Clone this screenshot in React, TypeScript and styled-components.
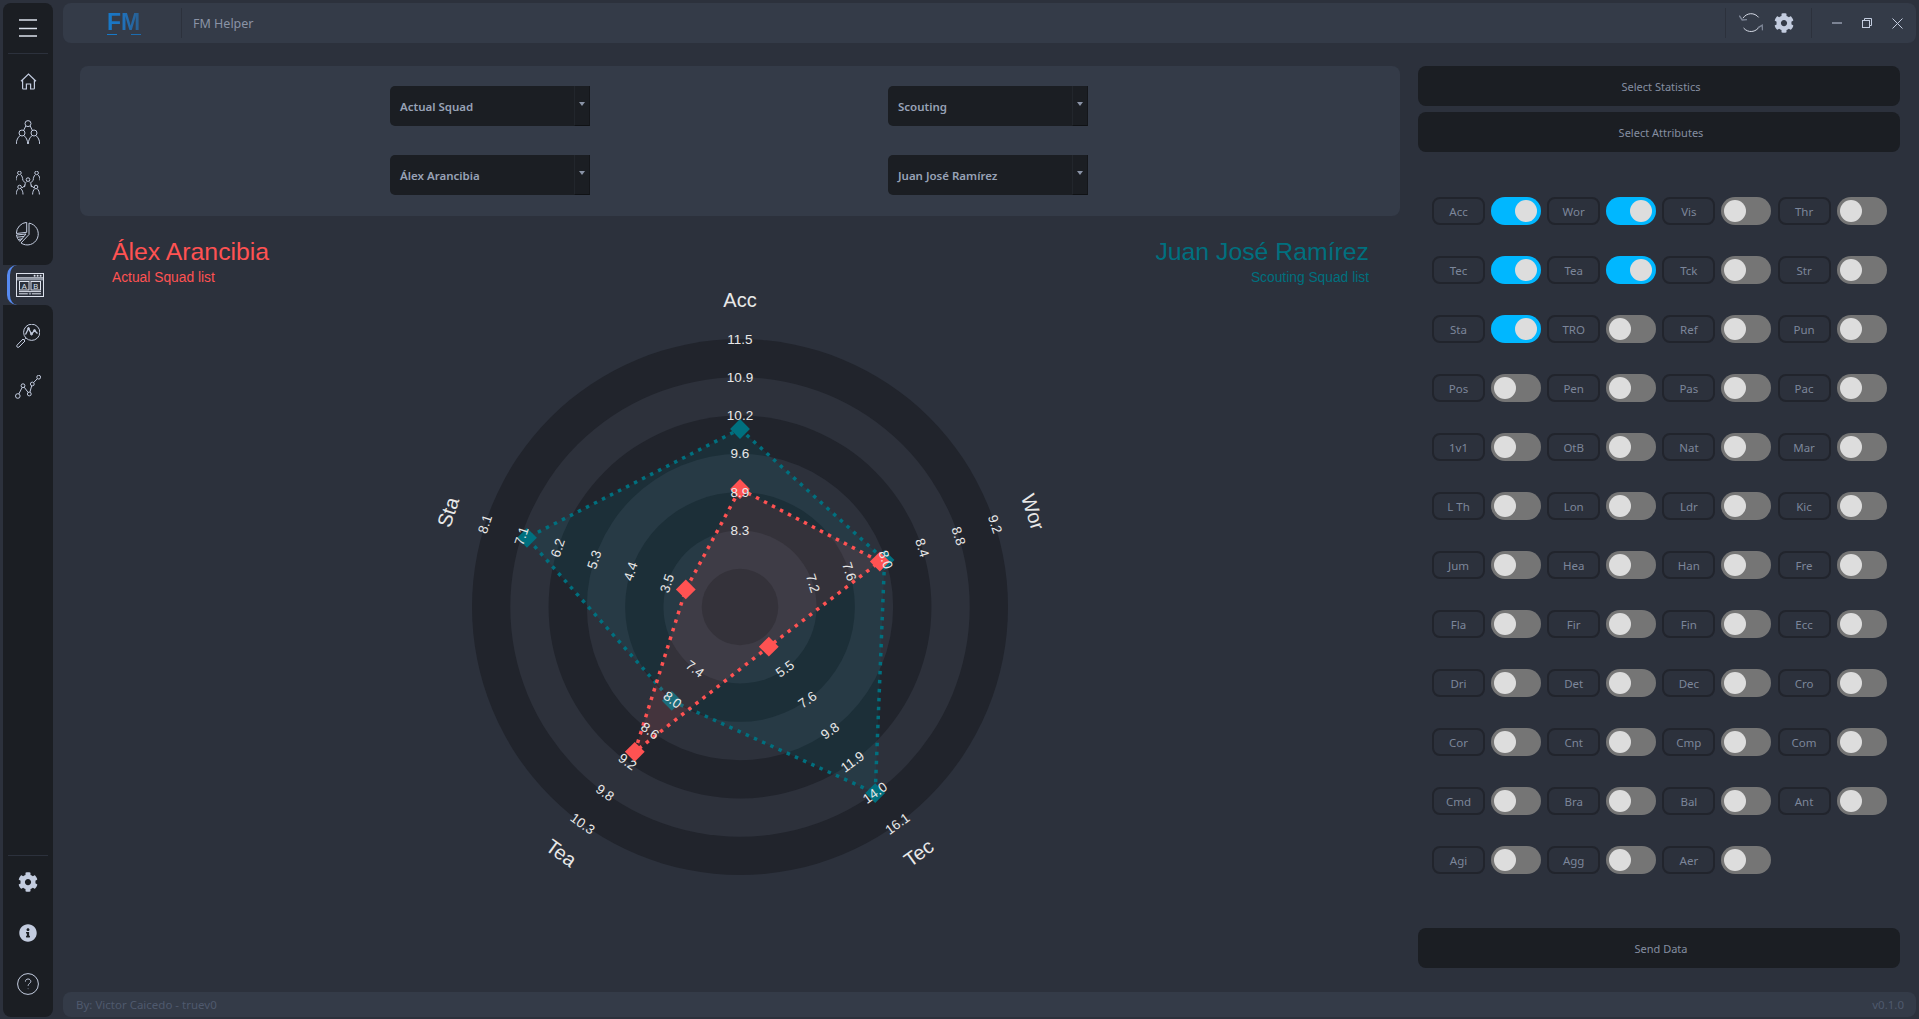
import React from "react";
import styled, { createGlobalStyle } from "styled-components";
import { FaCog, FaInfoCircle } from "react-icons/fa";

const GlobalStyle = createGlobalStyle`
  html, body {
    margin: 0;
    height: 100%;
    background: #2c313c;
    overflow: hidden;
  }
  * {
    box-sizing: border-box;
  }
`;

const UI_FONT = `"Noto Sans", "Open Sans", sans-serif`;

const Shell = styled.div`
  display: flex;
  gap: 10px;
  height: 1019px;
  padding: 3px 3px 2px 3px;
  font-family: ${UI_FONT};
`;

const Sidebar = styled.nav`
  width: 50px;
  display: flex;
  flex-direction: column;
`;

const SideSegment = styled.div<{ $first?: boolean }>`
  background: #1b1e23;
  display: flex;
  flex-direction: column;
  align-items: stretch;
  border-radius: ${(p) => (p.$first ? "8px 8px 8px 0" : "0 8px 8px 8px")};
  flex: ${(p) => (p.$first ? "0 0 262px" : "1")};
  padding: ${(p) => (p.$first ? "0 0 11px" : "11px 0 13px")};
`;

const Hamburger = styled.div`
  height: 51px;
  flex: none;
  display: flex;
  align-items: center;
  justify-content: center;
  margin: 0 5px 7px;
  border-bottom: 1px solid #2c313c;
`;

const SideItem = styled.div`
  height: 40px;
  flex: none;
  display: flex;
  align-items: center;
  justify-content: center;
  color: #c3ccdf;
  & + & {
    margin-top: 11px;
  }
`;

const ActiveItem = styled.div`
  height: 40px;
  flex: none;
  margin-left: 4px;
  display: flex;
  align-items: center;
  justify-content: center;
  padding-right: 4px;
  background: #2c313c;
  border-left: 3px solid #568af2;
  border-radius: 10px 0 0 10px;
  color: #dce1ec;
`;

const SideBottom = styled.div`
  margin-top: auto;
  margin-left: 5px;
  margin-right: 5px;
  padding-top: 6px;
  border-top: 1px solid #2c313c;
  display: flex;
  flex-direction: column;
`;

const SideTools = styled.div`
  display: flex;
  flex-direction: column;
  margin: 0 -5px;
`;

const Main = styled.div`
  flex: 1;
  min-width: 0;
  display: flex;
  flex-direction: column;
`;

const TopBar = styled.header`
  height: 40px;
  flex: none;
  display: flex;
  align-items: center;
  background: #343b48;
  border-radius: 8px;
`;

const LogoBox = styled.div`
  width: 119px;
  height: 30px;
  padding-left: 44px;
  display: flex;
  align-items: center;
  border-right: 1px solid #2c313c;
`;

const LogoText = styled.div`
  position: relative;
  width: 34px;
  height: 24px;
  font-family: "Liberation Sans", sans-serif;
  font-weight: 700;
  font-size: 23px;
  line-height: 22px;
  background: linear-gradient(90deg, #1679c9 0%, #1f72bd 45%, #2a5d8c 100%);
  -webkit-background-clip: text;
  background-clip: text;
  color: transparent;
  &::after {
    content: "";
    position: absolute;
    left: 0;
    right: 0;
    bottom: 0;
    height: 1px;
    background: linear-gradient(
      90deg,
      #1679c9 0 30%,
      transparent 30% 70%,
      #1b6cb0 70% 100%
    );
  }
`;

const AppTitle = styled.div`
  margin-left: 11px;
  font-size: 12.5px;
  color: #8a93a6;
`;

const BarSpacer = styled.div`
  flex: 1;
`;

const BarGroup = styled.div<{ $pad: string }>`
  height: 30px;
  display: flex;
  align-items: center;
  padding: ${(p) => p.$pad};
  border-left: 1px solid #2c313c;
`;

const BarButton = styled.div<{ $w: number }>`
  width: ${(p) => p.$w}px;
  height: 30px;
  display: flex;
  align-items: center;
  justify-content: center;
  color: #c3ccdf;
`;

const Content = styled.main`
  flex: 1;
  min-height: 0;
  display: flex;
  gap: 18px;
  padding: 23px 16px 24px 17px;
`;

const LeftColumn = styled.section`
  width: 1320px;
  flex: none;
  display: flex;
  flex-direction: column;
`;

const SelectPanel = styled.div`
  height: 150px;
  flex: none;
  display: grid;
  grid-template-columns: 200px 200px;
  column-gap: 298px;
  row-gap: 29px;
  align-content: start;
  padding: 20px 0 0 310px;
  background: #343b48;
  border-radius: 8px;
`;

const SelectBox = styled.div`
  height: 40px;
  display: flex;
  align-items: center;
  justify-content: space-between;
  background: #1b1e23;
  border-radius: 5px 0 0 5px;
  padding-left: 10px;
  font-size: 11.5px;
  font-weight: 600;
  color: #98a2b6;
`;

const SelectArrow = styled.div`
  width: 16px;
  height: 100%;
  display: flex;
  align-items: center;
  justify-content: center;
  padding-bottom: 3px;
  border-left: 1px solid #22262c;
  border-right: 1px solid #14161a;
  border-bottom: 1px solid #101215;
  &::after {
    content: "";
    border-left: 3.5px solid transparent;
    border-right: 3.5px solid transparent;
    border-top: 4px solid #8a93a6;
  }
`;

const ChartArea = styled.div`
  flex: 1;
  min-height: 0;
  display: grid;
`;

const NameRow = styled.div`
  grid-area: 1 / 1;
  align-self: start;
  display: flex;
  justify-content: space-between;
  padding: 21px 31px 0 32px;
  font-family: "Liberation Sans", sans-serif;
`;

const NameBlock = styled.div<{ $color: string; $right?: boolean }>`
  color: ${(p) => p.$color};
  text-align: ${(p) => (p.$right ? "right" : "left")};
`;

const PlayerName = styled.div`
  font-size: 24.8px;
  line-height: 30px;
`;

const PlayerList = styled.div`
  margin-top: 2px;
  font-size: 13.8px;
  line-height: 18px;
`;

const RadarSvg = styled.svg`
  grid-area: 1 / 1;
  display: block;
  font-family: "Liberation Sans", sans-serif;
`;

const RightColumn = styled.aside`
  flex: 1;
  display: flex;
  flex-direction: column;
`;

const DarkButton = styled.div`
  height: 40px;
  flex: none;
  display: flex;
  align-items: center;
  justify-content: center;
  padding-left: 4px;
  background: #1b1e23;
  border-radius: 8px;
  font-size: 11px;
  color: #858ea1;
  & + & {
    margin-top: 6px;
  }
`;

const AttributeGrid = styled.div`
  display: grid;
  grid-template-columns: repeat(4, 53px 50px);
  column-gap: 6.1px;
  row-gap: 31px;
  margin: 45px 0 0 14px;
`;

const Chip = styled.div`
  height: 28px;
  display: flex;
  align-items: center;
  justify-content: center;
  border: 2px solid #21242c;
  border-radius: 8px;
  font-size: 11.5px;
  color: #7c869a;
`;

const Toggle = styled.div<{ $on: boolean }>`
  height: 28px;
  display: flex;
  align-items: center;
  justify-content: ${(p) => (p.$on ? "flex-end" : "flex-start")};
  padding: ${(p) => (p.$on ? "0 4px 0 0" : "0 0 0 3px")};
  border-radius: 14px;
  background: ${(p) => (p.$on ? "#00b7ff" : "#757575")};
  &::after {
    content: "";
    width: 22px;
    height: 22px;
    border-radius: 50%;
    background: #dddddd;
  }
`;

const SendButton = styled(DarkButton)`
  margin-top: auto;
`;

const Footer = styled.footer`
  height: 25px;
  flex: none;
  display: flex;
  align-items: center;
  justify-content: space-between;
  padding: 0 12px 0 13px;
  background: #343b48;
  border-radius: 8px;
  font-size: 11.5px;
  color: #4f596d;
`;

const IconStroke = { fill: "none", stroke: "currentColor", strokeWidth: 1 } as const;

const MenuIcon = () => (
  <svg width="18" height="18" viewBox="0 0 18 18">
    <path d="M0 1h18M0 9.5h18M0 17h18" stroke="#dce1ec" strokeWidth="1.7" />
  </svg>
);

const HomeIcon = () => (
  <svg width="17" height="17" viewBox="0 0 17 17" {...IconStroke} strokeWidth={1.2}>
    <path d="M1 8.2 8.5 1 16 8.2M2.6 7v8.2q0 .8.8.8h3v-5h4.2v5h3q.8 0 .8-.8V7" />
  </svg>
);

const TeamIcon = () => (
  <svg width="24" height="24" viewBox="0 0 24 24" {...IconStroke}>
    <circle cx="12" cy="3.6" r="3" />
    <circle cx="6" cy="13" r="3" />
    <circle cx="18" cy="13" r="3" />
    <path d="M9.8 6 7.6 10.4M14.2 6l2.2 4.4M.3 24c0-4 1.6-6.5 3.6-8.3M11.7 24c0-4-1.6-6.5-3.6-8.3M12.3 24c0-4 1.6-6.5 3.6-8.3M23.7 24c0-4-1.6-6.5-3.6-8.3" />
  </svg>
);

const NetworkPerson = ({ x, y }: { x: number; y: number }) => (
  <g>
    <circle cx={x} cy={y} r="1.8" />
    <path d={`M${x - 3.4} ${y + 7.5}c0-2.6.8-4.4 1.8-5.4M${x + 3.4} ${y + 7.5}c0-2.6-.8-4.4-1.8-5.4`} />
  </g>
);

const NetworkIcon = () => (
  <svg width="24" height="24" viewBox="0 0 24 24" {...IconStroke}>
    <NetworkPerson x={3.4} y={1.9} />
    <NetworkPerson x={20.6} y={1.9} />
    <NetworkPerson x={12} y={8.6} />
    <NetworkPerson x={3.6} y={16} />
    <NetworkPerson x={20} y={16} />
    <path d="M6.8 9.4 9 11.5M17.2 9.4 15 11.5M6 17l3.5-3M18 17l-3.5-3" />
  </svg>
);

const PieIcon = () => (
  <svg width="24" height="24" viewBox="0 0 24 24" {...IconStroke}>
    <path d="M13 1.1A11 11 0 1 1 5 21l8-8.5z" />
    <path d="M10.7.3A11.5 11.5 0 0 0 .3 11.5l10.4-1.2z" />
    <path d="M.4 13 10 12 3.8 19.4A11 11 0 0 1 .4 13zM1.2 15.2 8 14.4M2.4 17.4l4-.5" />
  </svg>
);

const CompareIcon = () => (
  <svg width="28" height="24" viewBox="0 0 28 24" fill="none" stroke="currentColor" strokeWidth="1">
    <rect x=".5" y=".5" width="27" height="23" />
    <path d="M1 4.8h26" />
    <rect x="1" y="5" width="26" height="2.4" fill="#8f96a3" stroke="none" />
    <circle cx="18.6" cy="2.8" r="1" fill="currentColor" stroke="none" />
    <circle cx="21.6" cy="2.8" r="1" fill="currentColor" stroke="none" />
    <circle cx="24.6" cy="2.8" r="1" fill="currentColor" stroke="none" />
    <rect x="3.5" y="8.5" width="9.5" height="8.5" />
    <rect x="15" y="8.5" width="9.5" height="8.5" />
    <text x="8.2" y="15.6" fontSize="7.5" textAnchor="middle" fill="currentColor" stroke="none" fontFamily="Liberation Sans">A</text>
    <text x="19.8" y="15.6" fontSize="7.5" textAnchor="middle" fill="currentColor" stroke="none" fontFamily="Liberation Sans">B</text>
    <path d="M3 18.6h22M3 20.8h8.8M16 20.8h9" />
    <circle cx="14" cy="20.6" r="1.2" fill="#8f96a3" stroke="none" />
  </svg>
);

const SearchChartIcon = () => (
  <svg width="24" height="24" viewBox="0 0 24 24" {...IconStroke}>
    <circle cx="15.7" cy="8.3" r="8.1" />
    <path d="M9.8 14.2 8.4 15.6M7 15 1 21.2q-.6 1 .2 1.9.9.7 1.8-.1L9 17z" />
    <path d="M9.5 10.5 12.5 4.5 15.5 10l3-3.5 3 3" strokeWidth="1.3" />
    <circle cx="12.5" cy="4.5" r="1" />
    <circle cx="15.5" cy="10" r="1" />
    <circle cx="18.5" cy="6.5" r="1" />
  </svg>
);

const LineIcon = () => (
  <svg width="26" height="24" viewBox="0 0 26 24" {...IconStroke}>
    <circle cx="2.8" cy="21" r="2.3" />
    <circle cx="8" cy="10.7" r="1.9" />
    <circle cx="14.3" cy="19" r="1.9" />
    <circle cx="17.3" cy="9" r="1.9" />
    <circle cx="23.7" cy="2.2" r="1.9" />
    <path d="M3.8 19 7.2 12.4M9.2 12.2l4 5.3M14.9 17.2l1.8-6.4M18.6 7.6 22.4 3.6" />
  </svg>
);

const HelpIcon = () => (
  <svg width="22" height="22" viewBox="0 0 22 22" {...IconStroke}>
    <circle cx="11" cy="11" r="10.4" />
    <path d="M8.4 8.6c0-1.7 1.2-2.6 2.7-2.6s2.7 1 2.7 2.4c0 2-2.7 2.2-2.7 4.4" stroke="#c3ccdf" />
    <circle cx="11.1" cy="15.6" r=".6" fill="#6c7488" stroke="none" />
  </svg>
);

const RefreshIcon = () => (
  <svg width="24" height="20" viewBox="0 0 24 20" fill="none" strokeWidth="1">
    <path d="M4 5.2A9.5 9.5 0 0 1 19.6 4.4M20.3 13.6A9.5 9.5 0 0 1 4.6 15" stroke="#d4d9e4" />
    <path d="M.3 2.6 3.2 7 8 6.6M23.6 17.4l-.4-5.2-4.4 2.6" stroke="#7d8596" strokeWidth="1.4" />
  </svg>
);

const MinimizeIcon = () => (
  <svg width="10" height="2" viewBox="0 0 10 2">
    <path d="M0 1h10" stroke="#c3ccdf" strokeWidth="1" />
  </svg>
);

const RestoreIcon = () => (
  <svg width="10" height="10" viewBox="0 0 10 10" {...IconStroke} stroke="#c3ccdf">
    <rect x=".5" y="2.5" width="7" height="7" />
    <path d="M2.5 2.5v-2h7v7h-2" />
  </svg>
);

const CloseIcon = () => (
  <svg width="11" height="11" viewBox="0 0 11 11">
    <path d="M.5.5l10 10M10.5.5l-10 10" stroke="#c3ccdf" strokeWidth="1" />
  </svg>
);

const attributes = [
  "Acc", "Wor", "Vis", "Thr", "Tec", "Tea", "Tck", "Str",
  "Sta", "TRO", "Ref", "Pun", "Pos", "Pen", "Pas", "Pac",
  "1v1", "OtB", "Nat", "Mar", "L Th", "Lon", "Ldr", "Kic",
  "Jum", "Hea", "Han", "Fre", "Fla", "Fir", "Fin", "Ecc",
  "Dri", "Det", "Dec", "Cro", "Cor", "Cnt", "Cmp", "Com",
  "Cmd", "Bra", "Bal", "Ant", "Agi", "Agg", "Aer",
];

const enabled = ["Acc", "Wor", "Tec", "Tea", "Sta"];

const RED = "#ff5252";
const TEAL = "#00707f";
const RING_DARK = "#21242c";
const RING_LIGHT = "#2d313b";
const RING_STEP = 268 / 7;

// angle from the top, text rotation, name radius, name and the labels from the outer ring inwards
const axes = [
  { angle: 0, rotate: 0, nameR: 307, name: "Acc", labels: ["11.5", "10.9", "10.2", "9.6", "8.9", "8.3"] },
  { angle: 72, rotate: 72, nameR: 308, name: "Wor", labels: ["9.2", "8.8", "8.4", "8.0", "7.6", "7.2"] },
  { angle: 144, rotate: -36, nameR: 304, name: "Tec", labels: ["16.1", "14.0", "11.9", "9.8", "7.6", "5.5"] },
  { angle: 216, rotate: 36, nameR: 304, name: "Tea", labels: ["10.3", "9.8", "9.2", "8.6", "8.0", "7.4"] },
  { angle: 288, rotate: -72, nameR: 307, name: "Sta", labels: ["8.1", "7.1", "6.2", "5.3", "4.4", "3.5"] },
];

const tealValues = [178, 152, 230, 116, 224];
const redValues = [118, 147, 49, 179, 57];

const polar = (angle: number, r: number) => {
  const rad = (angle * Math.PI) / 180;
  return { x: r * Math.sin(rad), y: -r * Math.cos(rad) };
};

const Series = ({ values, color, fill, opacity }: { values: number[]; color: string; fill: string; opacity: number }) => {
  const points = values.map((r, i) => polar(axes[i].angle, r));
  return (
    <g>
      <polygon
        points={points.map((p) => `${p.x},${p.y}`).join(" ")}
        fill={fill}
        fillOpacity={opacity}
        stroke={color}
        strokeWidth={3.5}
        strokeDasharray="3.5 5.5"
      />
      {points.map((p, i) => (
        <rect key={i} x={p.x - 7} y={p.y - 7} width={14} height={14} fill={color} transform={`rotate(45 ${p.x} ${p.y})`} />
      ))}
    </g>
  );
};

const AxisText = ({ angle, rotate, r, size, children }: { angle: number; rotate: number; r: number; size: number; children: string }) => {
  const p = polar(angle, r);
  return (
    <text
      transform={`translate(${p.x} ${p.y}) rotate(${rotate})`}
      fontSize={size}
      fill="#e8e8e8"
      textAnchor="middle"
      dominantBaseline="central"
    >
      {children}
    </text>
  );
};

const Radar = () => (
  <RadarSvg width="1320" height="760" viewBox="-660 -391 1320 760">
    {[7, 6, 5, 4, 3, 2, 1].map((k) => (
      <circle key={k} r={RING_STEP * k} fill={k % 2 ? RING_DARK : RING_LIGHT} />
    ))}
    <Series values={tealValues} color={TEAL} fill="#007f8c" opacity={0.13} />
    <Series values={redValues} color={RED} fill={RED} opacity={0.11} />
    {axes.map((axis) => (
      <g key={axis.name}>
        <AxisText angle={axis.angle} rotate={axis.rotate} r={axis.nameR} size={20}>
          {axis.name}
        </AxisText>
        {axis.labels.map((label, i) => (
          <AxisText key={i} angle={axis.angle} rotate={axis.rotate} r={RING_STEP * (7 - i)} size={13.5}>
            {label}
          </AxisText>
        ))}
      </g>
    ))}
  </RadarSvg>
);

const selects = ["Actual Squad", "Scouting", "Álex Arancibia", "Juan José Ramírez"];

const App = () => {
  return (
    <>
      <GlobalStyle />
      <Shell>
        <Sidebar>
          <SideSegment $first>
            <Hamburger>
              <MenuIcon />
            </Hamburger>
            <SideItem><HomeIcon /></SideItem>
            <SideItem><TeamIcon /></SideItem>
            <SideItem><NetworkIcon /></SideItem>
            <SideItem><PieIcon /></SideItem>
          </SideSegment>
          <ActiveItem>
            <CompareIcon />
          </ActiveItem>
          <SideSegment>
            <SideItem><SearchChartIcon /></SideItem>
            <SideItem><LineIcon /></SideItem>
            <SideBottom>
              <SideTools>
                <SideItem><FaCog size={20} /></SideItem>
                <SideItem><FaInfoCircle size={18} /></SideItem>
                <SideItem><HelpIcon /></SideItem>
              </SideTools>
            </SideBottom>
          </SideSegment>
        </Sidebar>

        <Main>
          <TopBar>
            <LogoBox>
              <LogoText>FM</LogoText>
            </LogoBox>
            <AppTitle>FM Helper</AppTitle>
            <BarSpacer />
            <BarGroup $pad="0 11px 0 8px">
              <BarButton $w={33}><RefreshIcon /></BarButton>
              <BarButton $w={33}><FaCog size={20} /></BarButton>
            </BarGroup>
            <BarGroup $pad="0 4px 0 10px">
              <BarButton $w={30}><MinimizeIcon /></BarButton>
              <BarButton $w={30}><RestoreIcon /></BarButton>
              <BarButton $w={30}><CloseIcon /></BarButton>
            </BarGroup>
          </TopBar>

          <Content>
            <LeftColumn>
              <SelectPanel>
                {selects.map((label) => (
                  <SelectBox key={label}>
                    {label}
                    <SelectArrow />
                  </SelectBox>
                ))}
              </SelectPanel>
              <ChartArea>
                <Radar />
                <NameRow>
                  <NameBlock $color={RED}>
                    <PlayerName>Álex Arancibia</PlayerName>
                    <PlayerList>Actual Squad list</PlayerList>
                  </NameBlock>
                  <NameBlock $color={TEAL} $right>
                    <PlayerName>Juan José Ramírez</PlayerName>
                    <PlayerList>Scouting Squad list</PlayerList>
                  </NameBlock>
                </NameRow>
              </ChartArea>
            </LeftColumn>

            <RightColumn>
              <DarkButton>Select Statistics</DarkButton>
              <DarkButton>Select Attributes</DarkButton>
              <AttributeGrid>
                {attributes.map((name) => (
                  <React.Fragment key={name}>
                    <Chip>{name}</Chip>
                    <Toggle $on={enabled.includes(name)} />
                  </React.Fragment>
                ))}
              </AttributeGrid>
              <SendButton>Send Data</SendButton>
            </RightColumn>
          </Content>

          <Footer>
            <span>By: Victor Caicedo - truev0</span>
            <span>v0.1.0</span>
          </Footer>
        </Main>
      </Shell>
    </>
  );
};

export default App;
